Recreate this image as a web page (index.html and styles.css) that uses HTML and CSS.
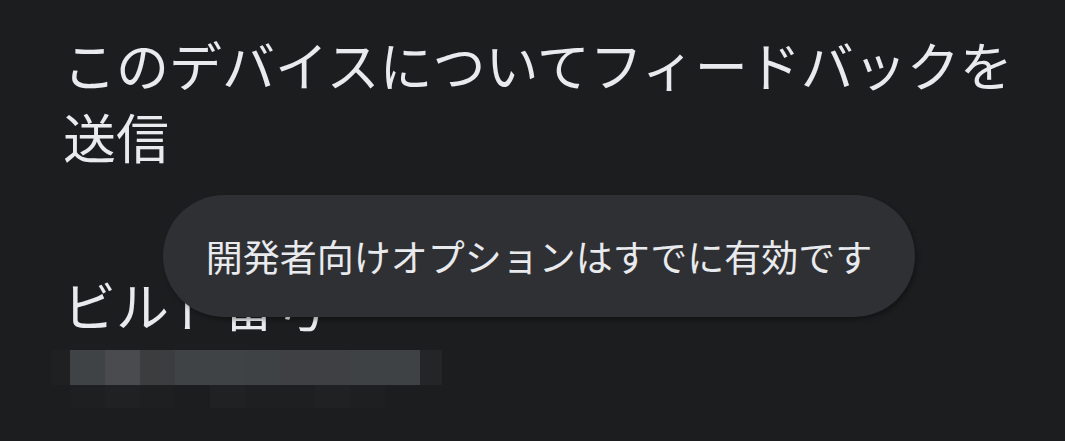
FILE: index.html
```html
<!DOCTYPE html>
<html lang="ja">
<head>
    <meta charset="UTF-8">
    <meta name="viewport" content="width=device-width, initial-scale=1.0">
    <title>デバイス情報</title>
    <link rel="stylesheet" href="styles.css">
</head>
<body>
    <div class="screen">
        <div class="pref">
            <div class="pref-title">このデバイスについてフィードバックを送信</div>
        </div>
        <div class="pref build">
            <div class="pref-title">ビルド番号</div>
            <div class="blur">
                <div class="blur-row">
                    <span class="cell edge"></span>
                    <span class="cell c1"></span>
                    <span class="cell c2"></span>
                    <span class="cell c3"></span>
                    <span class="cell c1"></span>
                    <span class="cell c1"></span>
                    <span class="cell c4"></span>
                    <span class="cell c5"></span>
                    <span class="cell c5"></span>
                    <span class="cell c4"></span>
                    <span class="cell c4"></span>
                    <span class="cell edge2"></span>
                </div>
                <div class="blur-row low">
                    <span class="cell gap"></span>
                    <span class="cell d1"></span>
                    <span class="cell d2"></span>
                    <span class="cell d1"></span>
                    <span class="cell"></span>
                    <span class="cell d2"></span>
                    <span class="cell d1"></span>
                    <span class="cell d1"></span>
                    <span class="cell d2"></span>
                    <span class="cell d1"></span>
                    <span class="cell"></span>
                </div>
            </div>
        </div>
        <div class="toast">開発者向けオプションはすでに有効です</div>
    </div>
</body>
</html>
```

FILE: styles.css
```css
body {
    margin: 0;
    padding: 0;
    background-color: #1c1d1f;
    color: #e8eaed;
    font-family: "Noto Sans CJK JP", "Noto Sans", sans-serif;
    overflow: hidden;
}

.screen {
    position: relative;
    width: 1065px;
    height: 441px;
    padding: 28px 0 0 63px;
    box-sizing: border-box;
}

.pref-title {
    font-size: 53px;
    line-height: 72px;
    width: 975px;
}

.build {
    margin-top: 100px;
}

.build .pref-title {
    line-height: 64px;
}

.blur {
    margin-top: 14px;
    margin-left: -12px;
    display: flex;
    flex-direction: column;
}

.blur-row {
    display: flex;
    height: 35px;
}

.blur-row.low {
    height: 23px;
}

.cell {
    width: 35px;
    height: 100%;
}

.cell.edge {
    width: 19px;
    background-color: #1f2022;
}

.cell.edge2 {
    width: 22px;
    background-color: #242527;
}

.cell.gap {
    width: 19px;
}

.c1 { background-color: #404346; }
.c2 { background-color: #4a4b4e; }
.c3 { background-color: #3c3d3e; }
.c4 { background-color: #3f4244; }
.c5 { background-color: #3f4043; }
.d1 { background-color: #1e1f21; }
.d2 { background-color: #202123; }

.toast {
    position: absolute;
    left: 163px;
    top: 195px;
    width: 752px;
    height: 122px;
    border-radius: 61px;
    background-color: #2f3033;
    box-shadow: 2px 3px 4px rgba(0, 0, 0, 0.3);
    display: flex;
    align-items: center;
    justify-content: center;
    font-size: 37px;
    color: #e8eaed;
}
```
